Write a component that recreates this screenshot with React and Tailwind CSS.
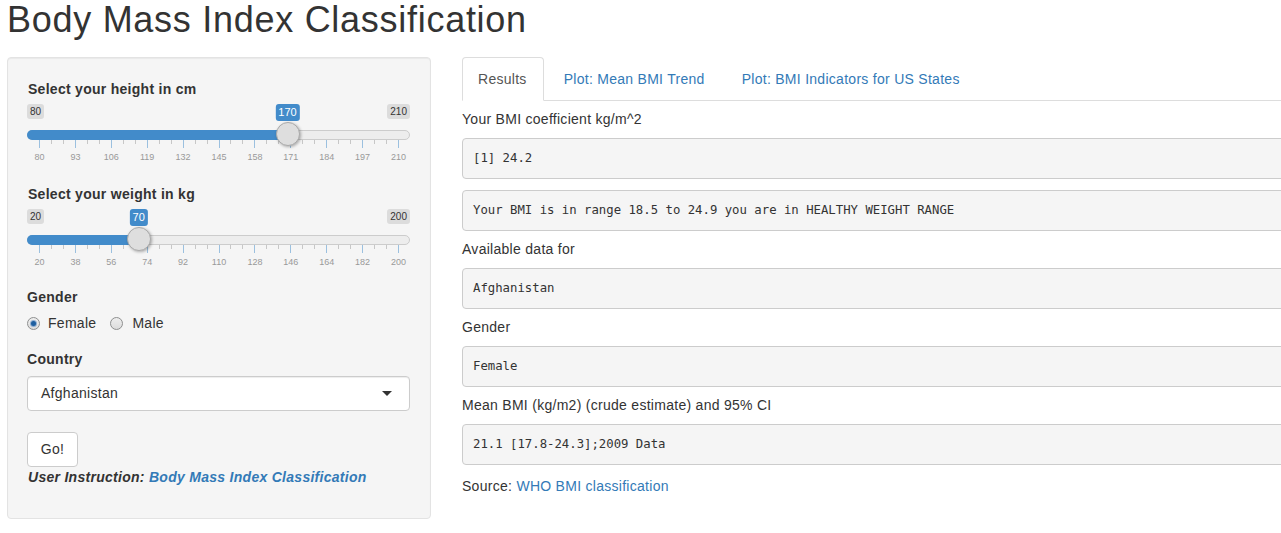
import React from "react";

function Slider({ min, max, value, step }) {
  const L = 12;
  const span = 359;
  const pos = L + ((value - min) / (max - min)) * span;
  const seg = span / 10;
  const majors = Array.from({ length: 11 }, (_, i) => i);
  return (
    <div className="relative h-[64px] w-[383px] tracking-normal">
      <span className="absolute left-0 top-0 rounded-[3px] bg-black/10 px-[3px] py-px text-[10px] leading-[13px] text-[#333]">
        {min}
      </span>
      <span className="absolute right-0 top-0 rounded-[3px] bg-black/10 px-[3px] py-px text-[10px] leading-[13px] text-[#333]">
        {max}
      </span>
      <div className="absolute left-0 right-0 top-[26px] h-[10px] rounded-full border border-[#cccccc] bg-[#ededed]" />
      <div
        className="absolute left-0 top-[26px] h-[10px] rounded-l-full bg-[#428bca]"
        style={{ width: pos }}
      />
      {majors.map((i) => (
        <React.Fragment key={i}>
          <div
            className="absolute top-[36px] h-[8px] w-px bg-[#428bca]/50"
            style={{ left: L + i * seg }}
          />
          {i < 10 && (
            <>
              <div
                className="absolute top-[36px] h-[4px] w-px bg-[#999999]/50"
                style={{ left: L + i * seg + seg / 3 }}
              />
              <div
                className="absolute top-[36px] h-[4px] w-px bg-[#999999]/50"
                style={{ left: L + i * seg + (2 * seg) / 3 }}
              />
            </>
          )}
          <span
            className="absolute top-[47px] -translate-x-1/2 text-[9px] leading-[12px] text-[#999999]"
            style={{ left: L + i * seg + 0.5 }}
          >
            {min + i * step}
          </span>
        </React.Fragment>
      ))}
      <span
        className="absolute top-0 -translate-x-1/2 rounded-[3px] bg-[#428bca] px-[3px] py-px text-[11px] leading-[15px] text-white"
        style={{ left: pos }}
      >
        {value}
      </span>
      <div
        className="absolute top-[18px] h-[24px] w-[24px] rounded-full border border-[#aaaaaa] bg-[#dedede] shadow-[1px_1px_3px_rgba(0,0,0,0.3)]"
        style={{ left: pos - 12 }}
      />
    </div>
  );
}

function Radio({ checked }) {
  return (
    <span className="flex h-[13px] w-[13px] items-center justify-center rounded-full border border-[#8e8f8f] bg-gradient-to-b from-[#eeeeee] to-[#dcdcdc]">
      {checked && (
        <span className="h-[5px] w-[5px] rounded-full bg-[#1e5fa0] shadow-[0_0_0_1px_rgba(60,120,190,0.5)]" />
      )}
    </span>
  );
}

function Pre({ children, className = "" }) {
  return (
    <pre
      className={
        "flex h-[41px] items-center rounded-[4px] border border-[#cccccc] bg-[#f5f5f5] px-[10px] font-['DejaVu_Sans_Mono',monospace] text-[12.3px] tracking-normal text-[#333] " +
        className
      }
    >
      {children}
    </pre>
  );
}

export default function App() {
  return (
    <div className="h-[533px] w-[1281px] overflow-hidden bg-white font-['Liberation_Sans',Arial,sans-serif] text-[14px] tracking-[0.28px] text-[#333]">
      <h2 className="pl-[7px] text-[36px] leading-[40px] font-normal tracking-[0.72px] text-[#333]">
        Body Mass Index Classification
      </h2>
      <div className="mt-[17px] flex pl-[7px]">
        {/* Sidebar */}
        <div className="w-[424px] shrink-0 rounded-[4px] border border-[#e3e3e3] bg-[#f5f5f5] px-[19px] pt-[21px] pb-[31px] shadow-[inset_0_1px_1px_rgba(0,0,0,0.05)]">
          <div className="mb-[5px] h-[20px] pl-[1px] leading-[20px] font-bold">Select your height in cm</div>
          <div className="mb-[16px]">
            <Slider min={80} max={210} value={170} step={13} />
          </div>
          <div className="mb-[5px] h-[20px] pl-[1px] leading-[20px] font-bold">Select your weight in kg</div>
          <div className="mb-[14px]">
            <Slider min={20} max={200} value={70} step={18} />
          </div>
          <div className="mb-[6px] h-[20px] leading-[20px] font-bold">Gender</div>
          <div className="flex h-[20px] items-center leading-[20px]">
            <label className="flex items-center">
              <Radio checked />
              <span className="ml-[8px]">Female</span>
            </label>
            <label className="ml-[14px] flex items-center">
              <Radio />
              <span className="ml-[9px]">Male</span>
            </label>
          </div>
          <div className="mt-[16px] mb-[7px] h-[20px] leading-[20px] font-bold">Country</div>
          <div className="flex h-[35px] w-[383px] items-center justify-between rounded-[4px] border border-[#cccccc] bg-white pl-[13px] pr-[17px] shadow-[inset_0_1px_1px_rgba(0,0,0,0.075)]">
            <span>Afghanistan</span>
            <span className="h-0 w-0 border-x-[5px] border-t-[5px] border-x-transparent border-t-[#333]" />
          </div>
          <button className="mt-[21px] flex h-[35px] w-[51px] items-center justify-center rounded-[4px] border border-[#cccccc] bg-white text-[#333]">
            Go!
          </button>
          <div className="h-[20px] pl-[1px] leading-[20px] font-bold italic">
            User Instruction: <a className="text-[#337ab7]">Body Mass Index Classification</a>
          </div>
        </div>

        {/* Main */}
        <div className="ml-[31px] w-[860px] shrink-0">
          <ul className="flex h-[44px] border-b border-[#dddddd]">
            <li className="-mb-px mr-[3px]">
              <a className="flex h-[44px] items-center rounded-t-[4px] border border-[#dddddd] border-b-transparent bg-white pl-[15px] pr-[16px] text-[#555555]">
                Results
              </a>
            </li>
            <li className="-mb-px mr-[3px]">
              <a className="flex h-[44px] items-center rounded-t-[4px] border border-transparent px-[16px] text-[#337ab7]">
                Plot: Mean BMI Trend
              </a>
            </li>
            <li className="-mb-px mr-[3px]">
              <a className="flex h-[44px] items-center rounded-t-[4px] border border-transparent px-[16px] text-[#337ab7]">
                Plot: BMI Indicators for US States
              </a>
            </li>
          </ul>
          <div className="mt-[8px] h-[20px] leading-[20px]">Your BMI coefficient kg/m^2</div>
          <Pre className="mt-[9px]">[1] 24.2</Pre>
          <Pre className="mt-[11px]">
            Your BMI is in range 18.5 to 24.9 you are in HEALTHY WEIGHT RANGE
          </Pre>
          <div className="mt-[8px] h-[20px] leading-[20px]">Available data for</div>
          <Pre className="mt-[9px]">Afghanistan</Pre>
          <div className="mt-[8px] h-[20px] leading-[20px]">Gender</div>
          <Pre className="mt-[9px]">Female</Pre>
          <div className="mt-[8px] h-[20px] leading-[20px]">
            Mean BMI (kg/m2) (crude estimate) and 95% CI
          </div>
          <Pre className="mt-[9px]">21.1 [17.8-24.3];2009 Data</Pre>
          <div className="mt-[11px] h-[20px] leading-[20px]">
            Source: <a className="text-[#337ab7]">WHO BMI classification</a>
          </div>
        </div>
      </div>
    </div>
  );
}
